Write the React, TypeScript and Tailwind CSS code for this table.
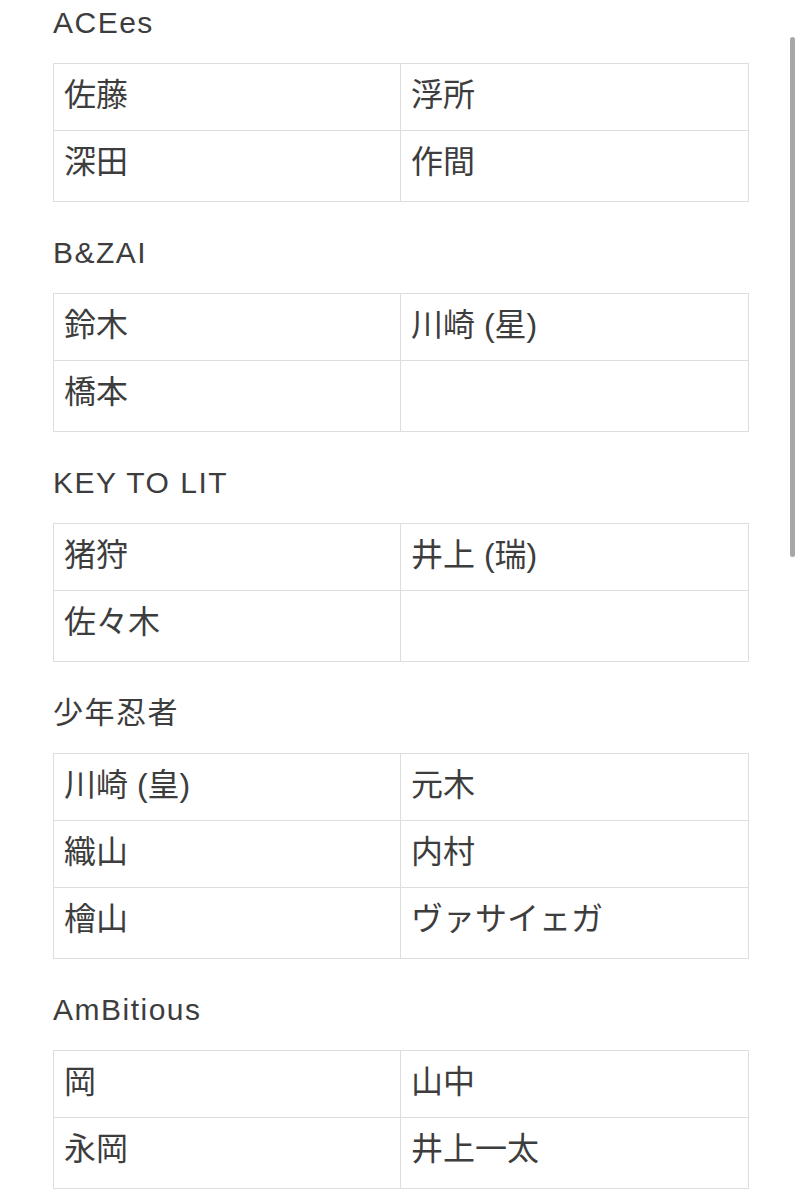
import React from 'react'

interface Group {
  name: string
  members: string[]
}

const groups: Group[] = [
  { name: 'ACEes', members: ['佐藤', '浮所', '深田', '作間'] },
  { name: 'B&ZAI', members: ['鈴木', '川崎 (星)', '橋本', ''] },
  { name: 'KEY TO LIT', members: ['猪狩', '井上 (瑞)', '佐々木', ''] },
  { name: '少年忍者', members: ['川崎 (皇)', '元木', '織山', '内村', '檜山', 'ヴァサイェガ'] },
  { name: 'AmBitious', members: ['岡', '山中', '永岡', '井上一太'] },
]

const font = { fontFamily: '"Liberation Sans", "Noto Sans CJK JP", sans-serif' }

const MemberTable: React.FC<{ members: string[] }> = ({ members }): JSX.Element => {
  const rows: string[][] = []
  for (let i = 0; i < members.length; i += 2) rows.push(members.slice(i, i + 2))

  return (
    <div className="border border-[#dedede] text-[32px] leading-[40px]">
      {rows.map((row, i) => {
        const last = i === rows.length - 1
        return (
          <div key={i} className={last ? 'grid grid-cols-2' : 'grid grid-cols-2 border-b border-[#dedede]'}>
            <div className={last ? 'h-[70px] pl-[10px] pt-[11px] border-r border-[#dedede]' : 'h-[66px] pl-[10px] pt-[11px] border-r border-[#dedede]'}>
              {row[0]}
            </div>
            <div className={last ? 'h-[70px] pl-[10px] pt-[11px]' : 'h-[66px] pl-[10px] pt-[11px]'}>{row[1]}</div>
          </div>
        )
      })}
    </div>
  )
}

const App: React.FC = (): JSX.Element => {
  return (
    <div className="relative min-h-screen bg-white text-[#3d3d3d]" style={font}>
      <div className="flex flex-col gap-[28px] px-[53px] pb-10">
        {groups.map((g) => (
          <section key={g.name}>
            <h2 className="h-[63px] pt-[3px] text-[30px] leading-[40px] tracking-[1.5px]">{g.name}</h2>
            <MemberTable members={g.members} />
          </section>
        ))}
      </div>

      {/* scroll indicator */}
      <div className="absolute left-[790px] top-[37px] h-[520px] w-[5px] rounded-full bg-[#a8a8a8]" />
    </div>
  )
}

export default App
